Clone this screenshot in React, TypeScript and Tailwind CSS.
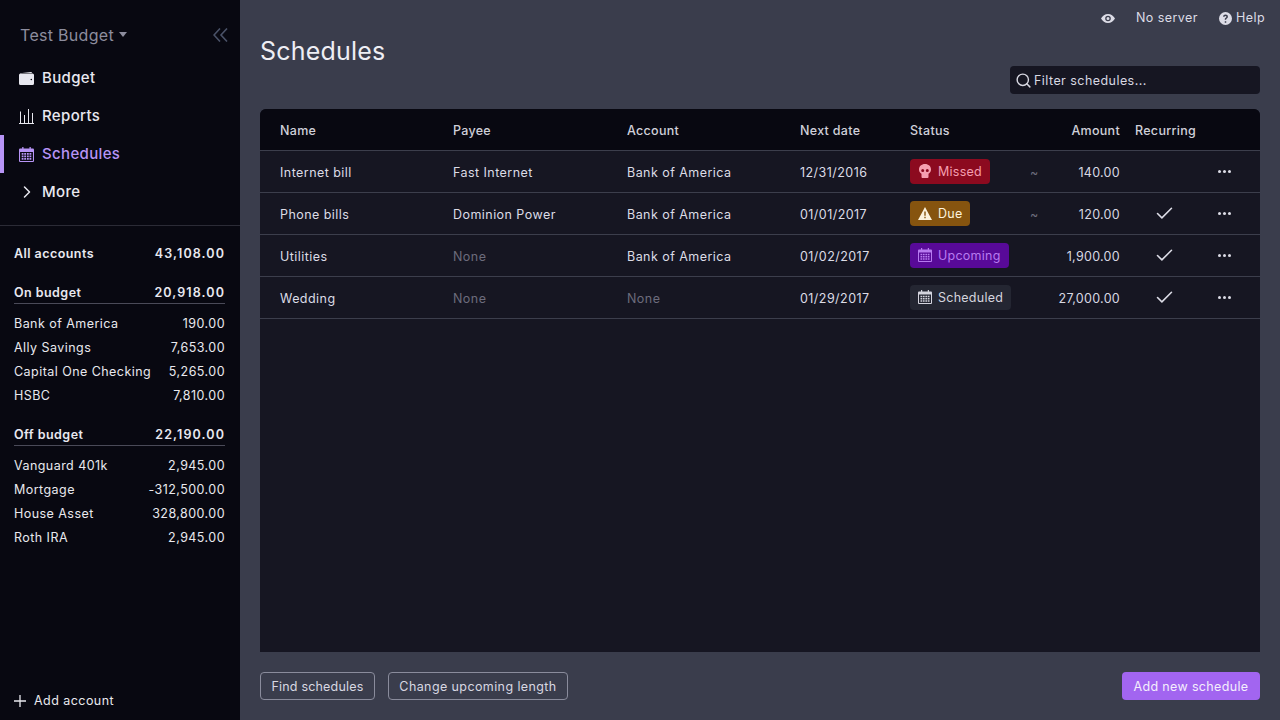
import type { ReactNode } from 'react'
import { ChevronRight, Search, Check } from 'lucide-react'

function CalendarIcon({ className }: { className?: string }) {
  return (
    <svg viewBox="0 0 14 14" className={className} fill="currentColor">
      <path fillRule="evenodd" d="M3 0h1.200v1.500h5.600V0H11v1.500h2a1 1 0 0 1 1 1V13a1 1 0 0 1-1 1H1a1 1 0 0 1-1-1V2.500a1 1 0 0 1 1-1h2V0zM1 4.600V13h12V4.600H1z" />
      <path d="M2.500 5.700h1.700v1.500H2.500zM4.900 5.700h1.700v1.500H4.900zM7.400 5.700h1.700v1.500H7.400zM9.800 5.700h1.700v1.500H9.800zM2.500 8h1.700v1.500H2.500zM4.900 8h1.700v1.500H4.900zM7.400 8h1.700v1.500H7.400zM9.800 8h1.700v1.500H9.800zM2.500 10.300h1.700v1.500H2.500zM4.900 10.300h1.700v1.500H4.900zM7.400 10.300h1.700v1.500H7.400zM9.800 10.300h1.700v1.500H9.800z" />
    </svg>
  )
}

function WalletIcon({ className }: { className?: string }) {
  return (
    <svg viewBox="0 0 15 13" className={className} fill="currentColor">
      <path d="M1 1.200 12 0c.6 0 1 .3 1 .9H1z" />
      <path fillRule="evenodd" d="M1.500 1.600H13.500A1.500 1.500 0 0 1 15 3.100v8.400a1.500 1.500 0 0 1-1.500 1.500h-12A1.500 1.500 0 0 1 0 11.500V3.100a1.500 1.500 0 0 1 1.500-1.500zM11.500 7.500a.8.8 0 1 0 1.600 0 .8.8 0 0 0-1.600 0z" />
    </svg>
  )
}

function ChartIcon({ className }: { className?: string }) {
  return (
    <svg viewBox="0 0 15 15" className={className} fill="none" stroke="currentColor" strokeWidth="1">
      <path d="M0 14.500h15M1.500 14V2.500M5.500 14V6M9.500 14V0M13.500 14V4" />
    </svg>
  )
}

function SkullIcon({ className }: { className?: string }) {
  return (
    <svg viewBox="0 0 14 14" className={className} fill="currentColor">
      <path fillRule="evenodd" d="M7 0c3.500 0 6 2.300 6 5.500 0 2-1 3.400-2.500 4.200V13a1 1 0 0 1-1 1h-5a1 1 0 0 1-1-1V9.700C2 8.900 1 7.500 1 5.500 1 2.300 3.500 0 7 0zM4.700 5a1.500 1.500 0 1 0 0 3 1.500 1.500 0 0 0 0-3zm4.600 0a1.500 1.500 0 1 0 0 3 1.500 1.500 0 0 0 0-3z" />
    </svg>
  )
}

function WarningIcon({ className }: { className?: string }) {
  return (
    <svg viewBox="0 0 14 13" className={className} fill="currentColor">
      <path fillRule="evenodd" d="M7 0 14 13H0L7 0zM6.300 4.500v4.300h1.400V4.500H6.300zm0 5.300v1.400h1.400V9.800H6.300z" />
    </svg>
  )
}

function EyeIcon({ className }: { className?: string }) {
  return (
    <svg viewBox="0 0 14 9" className={className} fill="currentColor">
      <path fillRule="evenodd" d="M7 0c3 0 5.500 2 7 4.500C12.500 7 10 9 7 9S1.500 7 0 4.500C1.500 2 4 0 7 0zm0 1.700a2.800 2.800 0 1 0 0 5.600 2.800 2.800 0 0 0 0-5.600zm0 1.300a1.500 1.500 0 1 1 0 3 1.500 1.500 0 0 1 0-3z" />
    </svg>
  )
}

function HelpIcon({ className }: { className?: string }) {
  return (
    <svg viewBox="0 0 14 14" className={className} fill="currentColor">
      <path fillRule="evenodd" d="M7 0a7 7 0 1 1 0 14A7 7 0 0 1 7 0zM6.200 10v1.500h1.600V10H6.200zM7 2.800C5.500 2.800 4.500 3.700 4.400 5.100h1.500c.1-.6.500-.9 1.100-.9s1 .3 1 .9c0 .5-.3.700-.8 1.100-.7.500-1 1-1 2.200h1.500c0-.8.200-1.100.8-1.500.7-.5 1.100-1.100 1.100-1.900 0-1.300-1-2.200-2.600-2.200z" />
    </svg>
  )
}

const nav = [
  { label: 'Budget', icon: <WalletIcon className="w-[15px] h-[13px]" /> },
  { label: 'Reports', icon: <ChartIcon className="w-[15px] h-[15px]" /> },
  { label: 'Schedules', icon: <CalendarIcon className="w-[15px] h-[15px]" />, active: true },
  { label: 'More', icon: <ChevronRight className="w-[20px] h-[20px] shrink-0" strokeWidth={1.8} /> },
]

const onBudget = [
  ['Bank of America', '190.00'],
  ['Ally Savings', '7,653.00'],
  ['Capital One Checking', '5,265.00'],
  ['HSBC', '7,810.00'],
]

const offBudget = [
  ['Vanguard 401k', '2,945.00'],
  ['Mortgage', '-312,500.00'],
  ['House Asset', '328,800.00'],
  ['Roth IRA', '2,945.00'],
]

function AccountGroup({ title, total, rows }: { title: string; total: string; rows: string[][] }) {
  return (
    <div>
      <div className="flex justify-between h-[23px] pt-[2px] items-center font-semibold text-[#e8e8f0] border-b border-[#4a4a58] ml-[14px] mr-[15px]">
        <span>{title}</span>
        <span className="tracking-[1.1px]">{total}</span>
      </div>
      <div className="pt-2">
        {rows.map(([name, value]) => (
          <div key={name} className="flex justify-between items-center h-[24px] pl-[14px] pr-[15px] text-[#e8e8ee]">
            <span>{name}</span>
            <span>{value}</span>
          </div>
        ))}
      </div>
    </div>
  )
}

function Sidebar() {
  return (
    <aside className="w-[240px] shrink-0 h-full bg-[#080811] flex flex-col text-[12.5px] tracking-[0.45px]">
      <div className="flex items-center justify-between h-[59px] pl-[20px] pr-[12px] pt-[10px]">
        <div className="flex items-center gap-[5px] text-[16px] text-[#8d8d9e] tracking-[0.3px]">
          Test Budget
          <svg viewBox="0 0 8 5" className="w-[8px] h-[5px]" fill="currentColor">
            <path d="M0 0h8L4 5z" />
          </svg>
        </div>
        <svg viewBox="0 0 15 14" className="w-[15px] h-[14px] text-[#4a5268]" fill="none" stroke="currentColor" strokeWidth="1.600">
          <path d="M7 .5 1 7l6 6.500M14 .5 8 7l6 6.500" />
        </svg>
      </div>
      <nav className="border-b border-[#2b2b36] h-[167px]">
        {nav.map((n) => (
          <div
            key={n.label}
            className={`flex items-center h-[38px] gap-[8px] pl-[15px] text-[15px] font-medium tracking-[0.35px] border-l-4 ${
              n.active ? 'border-[#b794f6] text-[#b794f6]' : 'border-transparent text-[#e8e8f0]'
            }`}
          >
            <span className="w-[15px] flex justify-center">{n.icon}</span>
            {n.label}
          </div>
        ))}
      </nav>
      <div className="flex justify-between items-center h-[24px] mt-[16px] mb-[15px] pl-[14px] pr-[15px] font-semibold text-[#e8e8f0]">
        <span>All accounts</span>
        <span className="tracking-[1.1px]">43,108.00</span>
      </div>
      <AccountGroup title="On budget" total="20,918.00" rows={onBudget} />
      <div className="h-[15px]" />
      <AccountGroup title="Off budget" total="22,190.00" rows={offBudget} />
      <div className="mt-auto flex items-center gap-[8px] h-[38px] px-[14px] text-[#e8e8ee]">
        <svg viewBox="0 0 12 12" className="w-[12px] h-[12px]" fill="none" stroke="currentColor" strokeWidth="1.300">
          <path d="M6 0v12M0 6h12" />
        </svg>
        <span className="pt-[1px]">Add account</span>
      </div>
    </aside>
  )
}

function StatusBadge({ className, icon, children }: { className: string; icon: ReactNode; children: ReactNode }) {
  return (
    <span className={`inline-flex items-center gap-[6px] h-[25px] px-[8px] rounded-[4px] tracking-[0.25px] ${className}`}>
      {icon}
      <span className="pt-[1px]">{children}</span>
    </span>
  )
}

const rows = [
  {
    name: 'Internet bill',
    payee: 'Fast Internet',
    account: 'Bank of America',
    date: '12/31/2016',
    status: (
      <StatusBadge className="bg-[#8c0a1f] text-[#f59fb0]" icon={<SkullIcon className="w-[14px] h-[14px]" />}>
        Missed
      </StatusBadge>
    ),
    approx: true,
    amount: '140.00',
    recurring: false,
  },
  {
    name: 'Phone bills',
    payee: 'Dominion Power',
    account: 'Bank of America',
    date: '01/01/2017',
    status: (
      <StatusBadge className="bg-[#86540f] text-[#fdf3dc]" icon={<WarningIcon className="w-[14px] h-[13px]" />}>
        Due
      </StatusBadge>
    ),
    approx: true,
    amount: '120.00',
    recurring: true,
  },
  {
    name: 'Utilities',
    payee: null,
    account: 'Bank of America',
    date: '01/02/2017',
    status: (
      <StatusBadge className="bg-[#580a98] text-[#b77bf0]" icon={<CalendarIcon className="w-[14px] h-[14px]" />}>
        Upcoming
      </StatusBadge>
    ),
    approx: false,
    amount: '1,900.00',
    recurring: true,
  },
  {
    name: 'Wedding',
    payee: null,
    account: null,
    date: '01/29/2017',
    status: (
      <StatusBadge className="bg-[#242632] text-[#d4d4de]" icon={<CalendarIcon className="w-[14px] h-[14px]" />}>
        Scheduled
      </StatusBadge>
    ),
    approx: false,
    amount: '27,000.00',
    recurring: true,
  },
]

const none = <span className="text-[#6c6c7c]">None</span>

function ScheduleTable() {
  return (
    <div className="flex-1 min-h-0 bg-[#161622] rounded-t-[6px] overflow-hidden">
      <div className="flex items-center h-[42px] bg-[#080811] border-b border-[#3c3e4c] text-[#d0d0da] font-medium pt-[3px] tracking-[0.3px]">
        <div className="w-[193px] pl-[20px]">Name</div>
        <div className="w-[174px]">Payee</div>
        <div className="w-[173px]">Account</div>
        <div className="w-[110px]">Next date</div>
        <div className="w-[120px]">Status</div>
        <div className="w-[90px] text-right">Amount</div>
        <div className="w-[90px] pl-[15px]">Recurring</div>
      </div>
      {rows.map((r) => (
        <div key={r.name} className="flex items-center h-[42px] border-b border-[#3c3e4c] text-[#dcdce6]">
          <div className="w-[193px] pl-[20px] pt-[3px]">{r.name}</div>
          <div className="w-[174px] pt-[3px]">{r.payee ?? none}</div>
          <div className="w-[173px] pt-[3px]">{r.account ?? none}</div>
          <div className="w-[110px] pt-[3px]">{r.date}</div>
          <div className="w-[120px]">{r.status}</div>
          <div className="w-[90px] flex justify-between items-center pt-[3px]">
            <span className="text-[#6c6c7c]">{r.approx ? '~' : ''}</span>
            <span className="text-[#d8d8e2] tracking-[0.3px]">{r.amount}</span>
          </div>
          <div className="w-[88px] flex justify-center">
            {r.recurring && <Check className="w-[21px] h-[21px] text-[#dcdce6]" strokeWidth={1.8} />}
          </div>
          <div className="w-[32px] flex pl-[10px]">
            <svg viewBox="0 0 13 3" className="w-[13px] h-[3px] text-[#dcdce6]" fill="currentColor">
              <circle cx="1.500" cy="1.500" r="1.500" />
              <circle cx="6.500" cy="1.500" r="1.500" />
              <circle cx="11.500" cy="1.500" r="1.500" />
            </svg>
          </div>
        </div>
      ))}
    </div>
  )
}

export default function App() {
  return (
    <div className="w-[1280px] h-[720px] flex overflow-hidden bg-[#3a3d4c] font-['Inter',sans-serif] text-[12.5px]">
      <Sidebar />
      <main className="flex-1 min-w-0 h-full flex flex-col tracking-[0.45px]">
        <div className="flex justify-end items-center h-[37px] pr-[15px] text-[#dcdce6]">
          <EyeIcon className="w-[14px] h-[9px] mr-[21px]" />
          <span className="mr-[21px]">No server</span>
          <span className="flex items-center gap-[4px]">
            <HelpIcon className="w-[13px] h-[13px]" />
            Help
          </span>
        </div>
        <div className="px-[20px] h-[29px] pt-[1px] flex items-center text-[25px] text-[#eeeef4] tracking-[0.2px]">Schedules</div>
        <div className="px-[20px] flex justify-end h-[43px]">
          <div className="w-[250px] h-[28px] flex items-center gap-[2px] pl-[5px] bg-[#161622] rounded-[4px] text-[#d8d8e2]">
            <Search className="w-[17px] h-[17px]" strokeWidth={2} />
            <span className="pt-[2px]">Filter schedules...</span>
          </div>
        </div>
        <div className="px-[20px] flex-1 min-h-0 flex flex-col">
          <ScheduleTable />
        </div>
        <div className="h-[68px] px-[20px] flex items-center justify-between">
          <div className="flex gap-[13px]">
            <button className="w-[115px] h-[28px] pt-[2px] border border-[#8a8c9c] rounded-[4px] text-[#d8d8e2] tracking-[0.2px]">Find schedules</button>
            <button className="w-[180px] h-[28px] pt-[2px] border border-[#8a8c9c] rounded-[4px] text-[#d8d8e2] tracking-[0.4px]">Change upcoming length</button>
          </div>
          <button className="w-[138px] h-[28px] pt-[2px] bg-[#a265f0] rounded-[4px] text-[#f4eefc] tracking-[0.35px]">Add new schedule</button>
        </div>
      </main>
    </div>
  )
}
